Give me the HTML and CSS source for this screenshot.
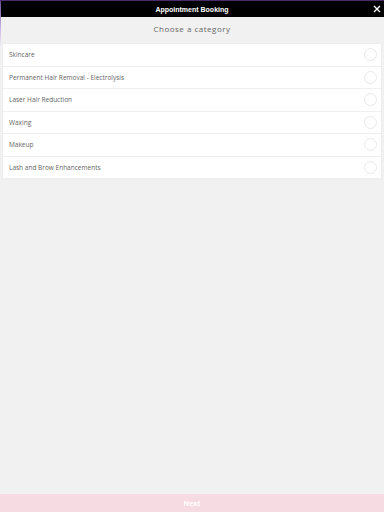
FILE: index.html
```html
<!DOCTYPE html>
<html lang="en">
<head>
    <meta charset="UTF-8">
    <meta name="viewport" content="width=device-width, initial-scale=1.0">
    <title>Appointment Booking</title>
    <link rel="stylesheet" href="styles.css">
</head>
<body>
    <div class="app">
        <!-- Header -->
        <div class="header">
            <span class="header-title">Appointment Booking</span>
            <span class="header-close">
                <svg width="8" height="8" viewBox="0 0 8 8"><path d="M1 1 L7 7 M7 1 L1 7" stroke="#fff" stroke-width="1.4"/></svg>
            </span>
        </div>

        <div class="content">
            <h1 class="page-title">Choose a category</h1>
            <div class="category-list">
                <div class="category-item"><span>Skincare</span><span class="radio"></span></div>
                <div class="category-item"><span>Permanent Hair Removal - Electrolysis</span><span class="radio"></span></div>
                <div class="category-item"><span>Laser Hair Reduction</span><span class="radio"></span></div>
                <div class="category-item"><span>Waxing</span><span class="radio"></span></div>
                <div class="category-item"><span>Makeup</span><span class="radio"></span></div>
                <div class="category-item"><span>Lash and Brow Enhancements</span><span class="radio"></span></div>
            </div>
        </div>

        <button class="next-button">Next</button>
    </div>
</body>
</html>
```

FILE: styles.css
```css
/* General Styles */
* {
    margin: 0;
    padding: 0;
    box-sizing: border-box;
    font-family: 'Open Sans', sans-serif;
}

body {
    background-color: #f1f1f1;
    color: #555;
}

.app {
    display: flex;
    flex-direction: column;
    height: 512px;
    border-top: 1px solid #4a2a6a;
    position: relative;
}

/* purple edge glow at the top left */
.app::before {
    content: "";
    position: absolute;
    left: 0;
    top: 0;
    width: 1px;
    height: 46px;
    background: linear-gradient(#6a4a9a, #c9b6e6 60%, rgba(201, 182, 230, 0));
    z-index: 2;
}

/* Header */
.header {
    height: 16px;
    background: #000;
    display: flex;
    align-items: center;
    justify-content: center;
    position: relative;
}

.header-title {
    color: #fff;
    font-family: 'Liberation Sans', Arial, sans-serif;
    font-size: 7px;
    font-weight: 700;
}

.header-close {
    position: absolute;
    right: 3px;
    top: 4px;
    line-height: 0;
}

/* Content */
.content {
    flex: 1;
    padding: 0 3px;
}

.page-title {
    font-size: 8px;
    font-weight: 400;
    letter-spacing: 0.5px;
    text-align: center;
    color: #666;
    height: 27px;
    line-height: 24px;
}

.category-list {
    background: #fff;
    box-shadow: 0 0 1px rgba(0, 0, 0, 0.08);
}

.category-item {
    height: 22.5px;
    display: flex;
    align-items: center;
    justify-content: space-between;
    padding: 0 4px 0 6px;
    border-bottom: 1px solid #efefef;
    font-size: 6.5px;
    color: #666;
}

.radio {
    width: 13px;
    height: 13px;
    border: 1px solid #e8e8e8;
    border-radius: 50%;
}

/* Next Button */
.next-button {
    height: 18px;
    width: 100%;
    border: none;
    background: #f7dbe2;
    color: #fff;
    font-size: 7px;
    font-weight: 700;
}
```
